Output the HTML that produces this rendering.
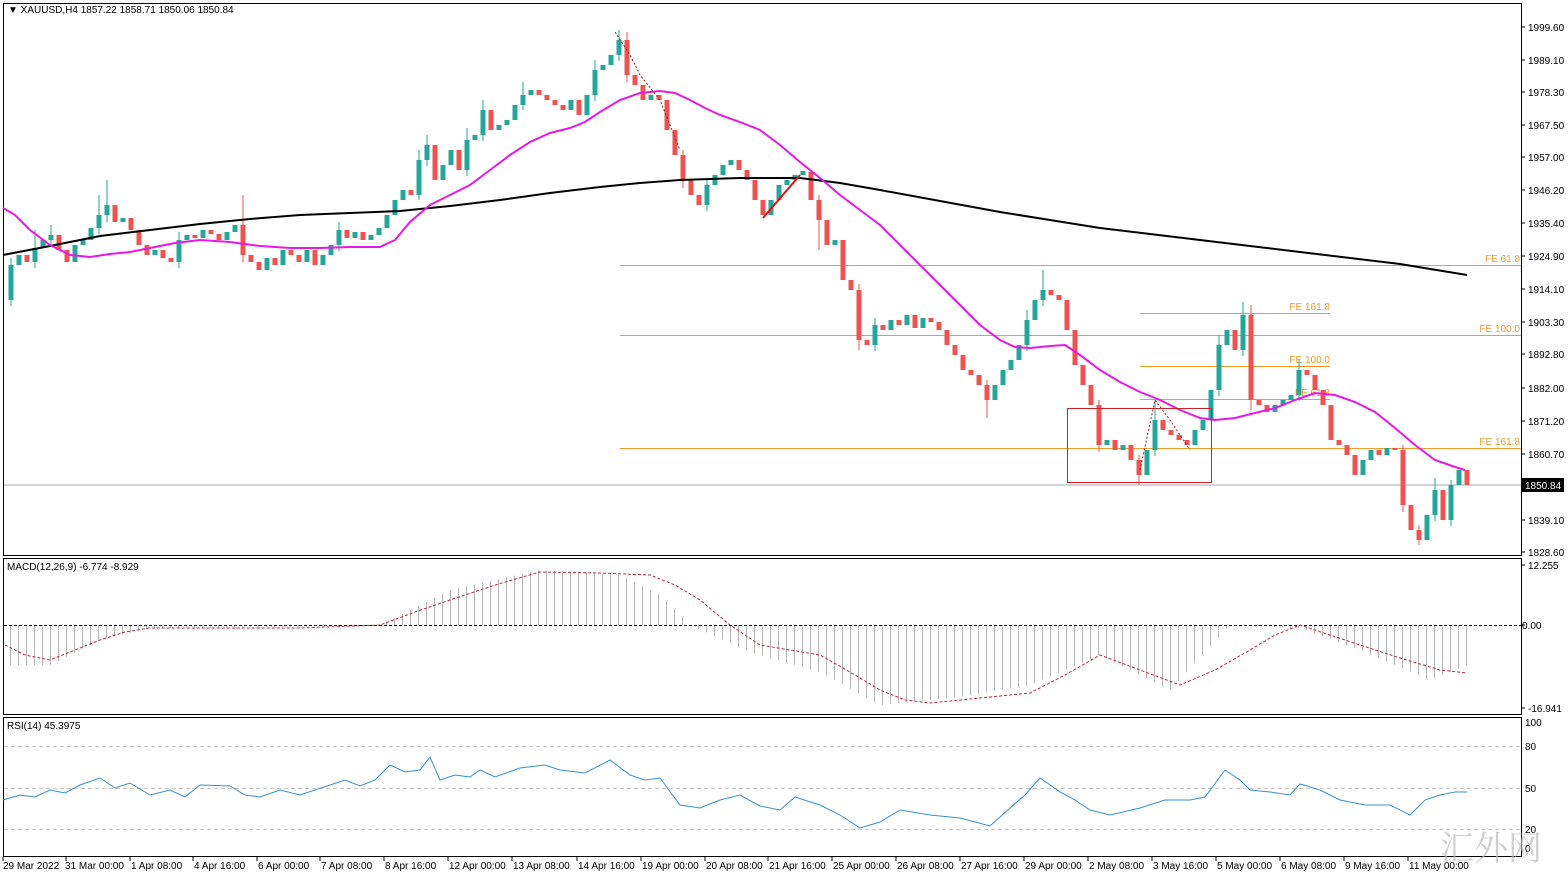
<!DOCTYPE html>
<html><head><meta charset="utf-8"><style>
html,body{margin:0;padding:0;background:#fff;width:1568px;height:877px;overflow:hidden}
svg{display:block}
text{font-family:"Liberation Sans",Tahoma,sans-serif;font-size:10px;fill:#000}
.fe{fill:#f29b2b}
</style></head><body>
<svg width="1568" height="877" xmlns="http://www.w3.org/2000/svg">
<defs>
<pattern id="hb" x="2" y="0" width="8" height="10" patternUnits="userSpaceOnUse"><rect x="0" y="0" width="1" height="10" fill="#b4b4b4"/></pattern>
</defs>
<rect x="0" y="0" width="1568" height="877" fill="#fff"/>
<rect x="3.5" y="3.5" width="1518" height="552" fill="none" stroke="#000"/>
<rect x="3.5" y="558.5" width="1518" height="156" fill="none" stroke="#000"/>
<rect x="3.5" y="717.5" width="1518" height="139" fill="none" stroke="#000"/>
<text x="8" y="13">▼ XAUUSD,H4  1857.22 1858.71 1850.06 1850.84</text>

<g stroke="#000">
<path d="M1521 27h4M1521 60h4M1521 92h4M1521 125h4M1521 157h4M1521 190h4M1521 223h4M1521 256h4M1521 289h4M1521 322h4M1521 354h4M1521 388h4M1521 421h4M1521 454h4M1521 520h4M1521 552h4M1521 565h4M1521 625h4M1521 708h4"/>
</g>
<text x="1528" y="31">1999.60</text><text x="1528" y="64">1989.10</text><text x="1528" y="96">1978.30</text><text x="1528" y="129">1967.50</text><text x="1528" y="161">1957.00</text><text x="1528" y="194">1946.20</text><text x="1528" y="227">1935.40</text><text x="1528" y="260">1924.90</text><text x="1528" y="293">1914.10</text><text x="1528" y="326">1903.30</text><text x="1528" y="358">1892.80</text><text x="1528" y="392">1882.00</text><text x="1528" y="425">1871.20</text><text x="1528" y="458">1860.70</text><text x="1528" y="524">1839.10</text><text x="1528" y="556">1828.60</text>

<line x1="4" y1="485" x2="1521" y2="485" stroke="#aaa"/>
<g stroke="#f29b2b">
<line x1="620" y1="265.5" x2="1521" y2="265.5"/><line x1="620" y1="335.5" x2="1521" y2="335.5"/><line x1="620" y1="448.5" x2="1521" y2="448.5"/>
<line x1="1140" y1="313.5" x2="1330" y2="313.5"/><line x1="1140" y1="366.5" x2="1330" y2="366.5"/><line x1="1140" y1="399.5" x2="1330" y2="399.5"/>
</g>
<text class="fe" x="1520" y="262" text-anchor="end">FE 61.8</text>
<text class="fe" x="1520" y="332" text-anchor="end">FE 100.0</text>
<text class="fe" x="1520" y="445" text-anchor="end">FE 161.8</text>
<text class="fe" x="1330" y="310" text-anchor="end">FE 161.8</text>
<text class="fe" x="1330" y="363" text-anchor="end">FE 100.0</text>
<text class="fe" x="1330" y="396" text-anchor="end">FE 61.8</text>

<path fill="none" stroke="#26a69a" stroke-width="5" d="M11 300V265M19 265V255M35 262V248M43 248V240M51 240V235M75 262V245M83 245V240M91 240V228M99 228V215M107 215V205M123 222V218M155 255V250M179 262V240M187 240V235M203 238V230M227 240V232M235 232V225M267 270V258M283 265V250M307 262V250M323 265V255M331 255V245M339 245V230M355 238V232M371 240V235M379 235V228M387 228V215M395 215V200M403 200V190M419 195V160M427 160V145M443 180V165M451 165V150M467 170V140M475 140V135M483 135V110M499 130V125M507 125V120M515 120V105M523 105V95M531 95V90M571 110V100M587 115V95M595 95V70M603 70V65M611 65V55M619 55V40M651 100V95M707 205V185M715 185V175M723 175V165M731 165V160M771 215V200M779 200V185M787 185V180M795 180V175M803 175V171M835 245V240M875 345V325M891 330V320M907 325V315M923 328V318M995 400V385M1003 385V370M1011 370V360M1019 360V345M1027 345V320M1035 320V300M1043 300V290M1107 445V440M1123 450V445M1147 475V450M1155 450V420M1195 445V430M1203 430V420M1211 420V390M1219 390V345M1227 345V330M1243 350V315M1275 412V405M1283 405V400M1291 400V395M1299 395V370M1363 475V460M1371 460V450M1387 455V448M1427 540V515M1435 515V490M1451 520V485M1459 485V470"/>
<path fill="none" stroke="#26a69a" stroke-width="1" d="M11 306V258M35 268V230M51 246V225M99 234V195M107 222V180M179 268V232M339 251V222M419 200V150M427 166V135M467 176V128M483 141V100M523 110V82M595 101V60M619 61V30M707 211V178M875 351V318M1027 351V310M1043 306V270M1155 456V400M1219 396V335M1243 356V302M1299 401V360M1435 521V478M1451 526V480"/>
<path fill="none" stroke="#ef5350" stroke-width="5" d="M27 255V262M59 235V250M67 250V262M115 205V222M131 218V230M139 230V245M147 245V255M163 250V258M171 258V262M195 235V238M211 230V234M219 234V240M243 225V255M251 255V262M259 262V270M275 258V265M291 250V255M299 255V262M315 250V265M347 230V238M363 232V240M411 190V195M435 145V180M459 150V170M491 110V130M539 90V95M547 95V100M555 100V105M563 105V110M579 100V115M627 40V75M635 75V85M643 85V100M659 95V100M667 100V130M675 130V155M683 155V180M691 180V195M699 195V205M739 160V170M747 170V180M755 180V200M763 200V215M811 172V200M819 200V220M827 220V245M843 240V280M851 280V290M859 290V340M867 340V345M883 325V330M899 320V325M915 315V328M931 318V322M939 322V330M947 330V345M955 345V355M963 355V370M971 370V375M979 375V385M987 385V400M1051 290V295M1059 295V300M1067 300V330M1075 330V365M1083 365V385M1091 385V405M1099 405V445M1115 440V450M1131 445V460M1139 460V475M1163 420V430M1171 430V435M1179 435V440M1187 440V445M1235 330V350M1251 315V400M1259 400V405M1267 405V412M1307 370V375M1315 375V390M1323 390V405M1331 405V440M1339 440V445M1347 445V455M1355 455V475M1379 450V455M1395 448V450M1403 450V505M1411 505V530M1419 530V540M1443 490V520M1467 470V485"/>
<path fill="none" stroke="#ef5350" stroke-width="1" d="M243 195V262M627 32V82M683 150V188M819 195V250M859 284V350M987 380V418M1099 400V452M1139 455V485M1251 305V410M1403 445V512M1419 525V545"/>

<polyline fill="none" stroke="#000" stroke-width="2" points="3,255 50,246 100,236 150,230 200,224 250,219 300,215 350,213 400,211 450,206 500,200 550,193 600,187 640,183 680,180 740,178 800,178 840,183 880,190 940,201 1000,212 1050,220 1100,228 1150,234 1200,240 1250,246 1300,252 1350,258 1400,264 1467,275"/>
<polyline fill="none" stroke="#e619e6" stroke-width="2" points="3,208 15,215 30,230 50,245 70,255 90,257 110,254 130,252 150,248 175,243 200,240 230,242 260,246 290,248 320,248 350,247 380,247 395,240 410,222 430,205 450,195 470,185 490,170 510,155 530,142 550,133 570,128 585,122 600,112 620,100 640,93 660,91 675,93 690,100 705,108 720,115 740,122 760,130 780,145 800,162 820,178 840,195 860,210 880,225 900,245 920,265 940,285 960,305 980,325 1000,340 1015,347 1030,348 1050,346 1065,345 1080,355 1100,370 1120,382 1140,392 1160,400 1180,410 1200,418 1215,420 1235,418 1255,413 1275,408 1295,400 1315,393 1335,395 1355,402 1375,412 1395,428 1415,445 1435,460 1455,467 1465,470"/>
<line x1="763" y1="218" x2="800" y2="175" stroke="#e01010" stroke-width="2"/>
<rect x="1067.5" y="408.5" width="144" height="74" fill="none" stroke="#d0202a"/>
<polyline fill="none" stroke="#a02020" stroke-dasharray="2,2" points="615,32 630,55 640,75 660,100 680,150"/>
<polyline fill="none" stroke="#a02020" stroke-dasharray="2,2" points="1140,470 1155,400 1170,420 1190,450"/>

<text x="7" y="570">MACD(12,26,9) -6.774 -8.929</text>
<text x="1528" y="569">12.255</text><text x="1522" y="629">0.00</text><text x="1528" y="712">-16.941</text>
<polygon fill="url(#hb)" points="5,625 5,665 50,665 100,640 150,628 380,626 400,615 450,590 540,570 620,575 660,595 690,625 750,652 820,672 880,705 960,697 1030,685 1100,655 1170,690 1230,625 1300,628 1360,650 1430,680 1467,665 1467,625"/>
<line x1="4" y1="625.5" x2="1521" y2="625.5" stroke="#000" stroke-dasharray="3,2"/>
<polyline fill="none" stroke="#c0283a" stroke-dasharray="3,2" points="5,645 25,655 50,660 75,650 100,640 125,632 150,628 300,628 380,625 415,612 450,600 495,585 540,572 600,573 650,575 675,585 700,600 730,625 760,645 790,650 820,655 850,672 880,690 905,700 930,703 980,698 1030,693 1065,675 1100,655 1140,670 1180,685 1215,670 1250,650 1275,635 1300,625 1330,635 1360,645 1400,658 1440,670 1467,673"/>

<text x="7" y="729">RSI(14) 45.3975</text>
<g stroke="#c8c8c8" stroke-dasharray="4,3"><line x1="4" y1="746.5" x2="1521" y2="746.5"/><line x1="4" y1="788.5" x2="1521" y2="788.5"/><line x1="4" y1="829.5" x2="1521" y2="829.5"/></g>
<text x="1525" y="726">100</text><text x="1525" y="750">80</text><text x="1525" y="792">50</text><text x="1525" y="833">20</text><text x="1525" y="852">0</text>
<polyline fill="none" stroke="#3a8fd0" points="3,800 20,795 35,797 50,790 65,793 80,785 100,778 115,788 130,783 150,795 170,790 185,797 200,785 230,786 245,795 260,797 280,790 300,795 330,785 345,780 360,786 375,780 390,765 405,772 420,770 430,757 440,780 455,775 470,777 480,770 495,777 520,768 545,765 560,770 585,773 610,760 630,775 645,780 660,778 680,805 700,808 720,800 740,795 760,806 780,810 795,797 820,805 840,815 860,828 880,822 900,810 930,815 960,818 990,826 1010,808 1025,795 1040,778 1060,792 1075,800 1090,810 1110,815 1140,808 1165,800 1190,800 1205,797 1225,770 1240,780 1250,790 1270,792 1290,795 1300,784 1320,790 1340,800 1365,805 1390,805 1410,815 1425,800 1440,795 1455,792 1467,792"/>

<g stroke="#000"><path d="M3 857v4M66 857v4M130 857v4M193 857v4M257 857v4M320 857v4M384 857v4M448 857v4M512 857v4M577 857v4M641 857v4M705 857v4M768 857v4M832 857v4M896 857v4M960 857v4M1024 857v4M1088 857v4M1152 857v4M1216 857v4M1280 857v4M1344 857v4M1408 857v4"/></g>
<text x="3" y="869">29 Mar 2022</text><text x="65" y="869">31 Mar 00:00</text><text x="131" y="869">1 Apr 08:00</text><text x="194" y="869">4 Apr 16:00</text><text x="258" y="869">6 Apr 00:00</text><text x="321" y="869">7 Apr 08:00</text><text x="385" y="869">8 Apr 16:00</text><text x="449" y="869">12 Apr 00:00</text><text x="513" y="869">13 Apr 08:00</text><text x="578" y="869">14 Apr 16:00</text><text x="642" y="869">19 Apr 00:00</text><text x="706" y="869">20 Apr 08:00</text><text x="769" y="869">21 Apr 16:00</text><text x="833" y="869">25 Apr 00:00</text><text x="897" y="869">26 Apr 08:00</text><text x="961" y="869">27 Apr 16:00</text><text x="1025" y="869">29 Apr 00:00</text><text x="1089" y="869">2 May 08:00</text><text x="1153" y="869">3 May 16:00</text><text x="1217" y="869">5 May 00:00</text><text x="1281" y="869">6 May 08:00</text><text x="1345" y="869">9 May 16:00</text><text x="1409" y="869">11 May 00:00</text>

<text x="1440" y="860" style="font-size:34px;fill:#bbb;font-family:'Noto Serif CJK SC',serif" opacity="0.7">汇外网</text>
<rect x="1522" y="478" width="42" height="14" fill="#000"/>
<text x="1525" y="489" style="fill:#fff">1850.84</text>
</svg>
</body></html>
